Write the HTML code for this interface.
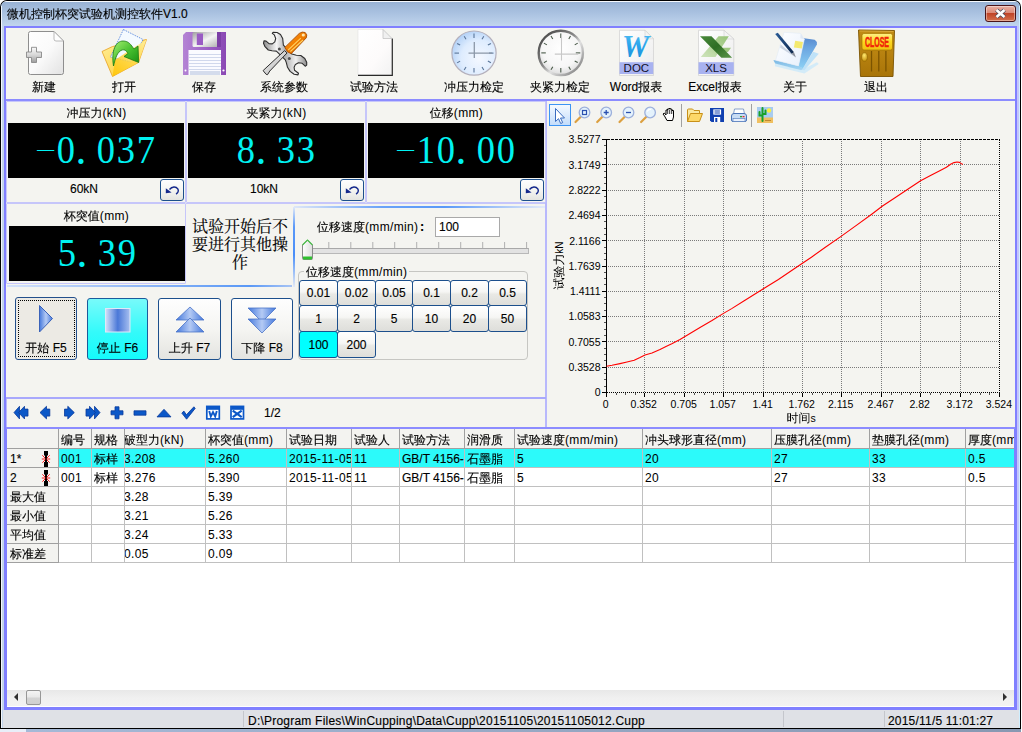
<!DOCTYPE html><html><head><meta charset="utf-8"><title>微机控制杯突试验机测控软件V1.0</title><style>
*{box-sizing:border-box;margin:0;padding:0}
html,body{width:1022px;height:732px;overflow:hidden;background:#fff}
body{position:relative;font-family:"Liberation Sans","WenQuanYi Zen Hei","Noto Sans CJK SC",sans-serif;font-size:12px;color:#000;line-height:14px;-webkit-text-stroke:.13px #000}
.a{position:absolute}
.l{letter-spacing:.35px;-webkit-text-stroke:.04px #000}
.c{position:absolute;text-align:center;white-space:nowrap}
.t{position:absolute;white-space:nowrap}
.pnl{position:absolute;border:1px solid #c6c6fa;border-radius:1px}
.blk{position:absolute;background:#000;overflow:hidden}
.dig{-webkit-text-stroke:0;position:absolute;left:0;right:0;text-align:center;color:#00f2f2;font-family:"Liberation Serif","Noto Serif CJK SC",serif;font-size:41px;line-height:41px;white-space:nowrap}
.dig i{display:inline-block;width:20px;font-style:normal;text-align:center;transform:translateX(-.3px) scaleX(.89)}
.dig i.m{transform:translate(-1.7px,-.9px) scale(.9,.55);transform-origin:50% 60%}
.dig i.p{transform:translate(-5px,0) scale(1.06)}
.btn{position:absolute;border:1px solid #1c4f8c;border-radius:3px;background:linear-gradient(#fefefe,#f5f5f2 50%,#e4e4e0);text-align:center;white-space:nowrap}
.sb{position:absolute;border:1px solid #1c4f8c;border-radius:3px;background:linear-gradient(#ffffff,#f6f6f4 45%,#e9e9e5 55%,#dededa);text-align:center;line-height:24px;font-size:12px}
.hd{position:absolute;background:#f3f3f0;border-right:1px solid #a0a0a0;border-bottom:1px solid #a0a0a0;overflow:hidden;white-space:nowrap;height:19px;line-height:20px;font-size:12px}
.cl{position:absolute;border-right:1px solid #c0c0c0;border-bottom:1px solid #c0c0c0;overflow:hidden;white-space:nowrap;height:19px;line-height:20px;font-size:12px}
</style></head><body>
<div class="a" style="left:0;top:729px;width:1021px;height:3px;background:linear-gradient(90deg,#a6bad8,#8898b2)"></div>
<div class="a" style="left:0;top:729px;width:26px;height:3px;background:#e8eef8"></div>
<div class="a" style="left:0;top:0;width:1021px;height:729px;background:#000;border-radius:7px 7px 0 0"></div>
<div class="a" style="left:1px;top:1px;width:1019px;height:727px;background:#c3d4ea;border-radius:6px 6px 0 0"></div>
<div class="a" style="left:1px;top:1px;width:1019px;height:26px;background:linear-gradient(#f6f9fd 0,#f6f9fd 1px,#98b2d4 1px,#a9c1e0 45%,#c2d6ee);border-radius:6px 6px 0 0"></div>
<div class="a" style="left:1019px;top:6px;width:1px;height:722px;background:#cfefff"></div>
<div class="a" style="left:1px;top:6px;width:1px;height:722px;background:#f2f6fc"></div>
<div class="t" style="left:7px;top:7px;font-size:12px;line-height:14px">微机控制杯突试验机测控软件V1.0</div>
<div class="a" style="left:985px;top:5px;width:31px;height:17px;border:1px solid #4a1418;border-radius:3px;background:linear-gradient(#e9b0a2,#dc8a78 45%,#c04428 50%,#d4704c);box-shadow:inset 0 0 0 1px rgba(255,255,255,.4)"></div>
<svg class="a" style="left:994px;top:8px" width="13" height="11" viewBox="0 0 13 11"><path d="M2.5 2 L10.5 9 M10.5 2 L2.5 9" stroke="#4a4a5a" stroke-width="4.2" fill="none"/><path d="M2.5 2 L10.5 9 M10.5 2 L2.5 9" stroke="#fff" stroke-width="2.6" fill="none"/></svg>
<div class="a" style="left:4px;top:26px;width:1015px;height:684px;background:#c4c4fc"></div>
<div class="a" style="left:4px;top:26px;width:1013px;height:684px;background:#8080ff"></div>
<div class="a" style="left:6px;top:28px;width:1009px;height:679px;background:#f4f4f0"></div>
<div class="c" style="left:-6px;top:80px;width:100px;line-height:14px">新建</div>
<div class="c" style="left:74px;top:80px;width:100px;line-height:14px">打开</div>
<div class="c" style="left:154px;top:80px;width:100px;line-height:14px">保存</div>
<div class="c" style="left:234px;top:80px;width:100px;line-height:14px">系统参数</div>
<div class="c" style="left:324px;top:80px;width:100px;line-height:14px">试验方法</div>
<div class="c" style="left:424px;top:80px;width:100px;line-height:14px">冲压力检定</div>
<div class="c" style="left:510px;top:80px;width:100px;line-height:14px">夹紧力检定</div>
<div class="c" style="left:586px;top:80px;width:100px;line-height:14px">Word报表</div>
<div class="c" style="left:665px;top:80px;width:100px;line-height:14px">Excel报表</div>
<div class="c" style="left:745px;top:80px;width:100px;line-height:14px">关于</div>
<div class="c" style="left:826px;top:80px;width:100px;line-height:14px">退出</div>
<svg class="a" style="left:24px;top:28px" width="44" height="50" viewBox="24 28 44 50"><defs><linearGradient id="nd1" x1="0" y1="0" x2="1" y2="1"><stop offset="0" stop-color="#ffffff"/><stop offset=".5" stop-color="#fafafa"/><stop offset="1" stop-color="#e2e2e2"/></linearGradient><linearGradient id="nd2" x1="0" y1="0" x2="0" y2="1"><stop offset="0" stop-color="#fafafa"/><stop offset=".5" stop-color="#d8d8d8"/><stop offset="1" stop-color="#9c9c9c"/></linearGradient></defs><path d="M30.5 31.5 H54 L63.5 41 V72.5 Q63.5 74.5 61.5 74.5 H30.5 Q28.5 74.5 28.5 72.5 V33.5 Q28.5 31.5 30.5 31.5Z" fill="url(#nd1)" stroke="#8e8e8e" stroke-width="1"/><path d="M54 31.5 V39 Q54 41 56 41 H63.5 Z" fill="#fdfdfd" stroke="#a8a8a8" stroke-width=".8"/><path d="M31.500 47.300 H36.500 V52 H41.500 V57.500 H36.500 V62.500 H31.500 V57.500 H26.500 V52 H31.500Z" fill="url(#nd2)" stroke="#8a8a8a" stroke-width=".9" stroke-linejoin="round"/></svg>
<svg class="a" style="left:98px;top:27px" width="52" height="52" viewBox="98 27 52 52"><defs><linearGradient id="op1" x1="0" y1="0" x2="1" y2="1"><stop offset="0" stop-color="#fff0a0"/><stop offset="1" stop-color="#ffc820"/></linearGradient><linearGradient id="op2" x1="0" y1="1" x2="1" y2="0"><stop offset="0" stop-color="#ffc400"/><stop offset=".5" stop-color="#ffd84a"/><stop offset="1" stop-color="#fff2a8"/></linearGradient><linearGradient id="op3" x1="0" y1="0" x2="1" y2="1"><stop offset="0" stop-color="#a6f070"/><stop offset=".5" stop-color="#48c030"/><stop offset="1" stop-color="#148a10"/></linearGradient></defs><path d="M102 51.5 L112.5 46.5 L146.5 39.5 L138.5 62.5 L112.5 76.5Z" fill="url(#op1)" stroke="#e8a020" stroke-width=".8"/><path d="M123.4 29.5 L143 39.5 L131 62 L110.5 57Z" fill="#f4faff" stroke="#5a8ae0" stroke-width=".9" stroke-dasharray="1.5 1"/><path d="M112.5 76.5 L115 60 L130 50 L146.5 39.5 L138.5 62.5Z" fill="url(#op2)" opacity=".85"/><path d="M113.5 66 C111 50 116 41 123 41 C129 41 131 45 134 49 L138 46 L138.7 62.5 L124 56.5 L128 53.5 C126 50 124 49.5 122 50 C117 52 115.5 58 113.5 66Z" fill="url(#op3)" stroke="#1c7a10" stroke-width=".8"/></svg>
<svg class="a" style="left:180px;top:30px" width="50" height="48" viewBox="180 30 50 48"><defs><linearGradient id="sv1" x1="0" y1="0" x2="1" y2="0"><stop offset="0" stop-color="#b484d4"/><stop offset=".5" stop-color="#a064c8"/><stop offset="1" stop-color="#8a48b4"/></linearGradient><linearGradient id="sv2" x1="0" y1="0" x2="1" y2="1"><stop offset="0" stop-color="#a0a0a0"/><stop offset=".5" stop-color="#f4f4f4"/><stop offset="1" stop-color="#a8a8a8"/></linearGradient></defs><path d="M186 32 H226 V75 H183 V35Z" fill="url(#sv1)"/><rect x="192.5" y="32" width="28.5" height="15" rx="1.5" fill="url(#sv2)"/><rect x="217" y="32" width="4" height="15" fill="#7c3fa6"/><rect x="196.8" y="33.5" width="6.2" height="11.5" fill="#9a5cc4"/><rect x="188.5" y="50" width="32.5" height="25" fill="#fafbff"/><path d="M189 54.5H221M189 57.5H221M189 60.5H221M189 63.5H221M189 66.5H221M189 69.5H221" stroke="#d0d8ec" stroke-width="1"/><rect x="190" y="71" width="30" height="4" fill="#d4dcec"/><circle cx="185.5" cy="70.5" r="1" fill="#fff"/><circle cx="223.5" cy="70.5" r="1.1" fill="#fff"/></svg>
<svg class="a" style="left:258px;top:28px" width="54" height="50" viewBox="258 28 54 50"><defs><linearGradient id="tl1" x1="0" y1="0" x2="1" y2="0"><stop offset="0" stop-color="#8c8c8c"/><stop offset=".3" stop-color="#f6f6f6"/><stop offset=".5" stop-color="#b0b0b0"/><stop offset=".75" stop-color="#f0f0f0"/><stop offset="1" stop-color="#8c8c8c"/></linearGradient><linearGradient id="tl2" x1="0" y1="0" x2="1" y2="1"><stop offset="0" stop-color="#ffffff"/><stop offset="1" stop-color="#a8a8a8"/></linearGradient><linearGradient id="tl3" x1="0" y1="0" x2="1" y2="1"><stop offset="0" stop-color="#ffa020"/><stop offset=".5" stop-color="#f07c00"/><stop offset="1" stop-color="#c85c00"/></linearGradient></defs><polygon points="273.1 32.3 277.1 32.5 280.5 34.5 282.7 38.5 283.4 45.2 291.9 54.0 296.3 55.2 300.8 55.5 304.8 58.5 306.7 62.2 306.7 65.1 305.2 66.2 302.2 63.3 298.5 62.8 295.4 64.4 294.1 67.3 294.5 70.3 298.5 73.2 298.0 74.9 294.1 74.3 290.1 71.4 287.5 67.3 286.4 62.9 285.3 59.9 276.4 51.1 272.0 50.7 268.3 50.0 265.0 46.7 263.5 43.3 264.0 40.8 266.1 41.1 269.0 43.6 272.3 43.9 274.8 41.9 275.7 38.5 274.3 34.9 272.3 33.4" fill="url(#tl1)" stroke="#2e2e2e" stroke-width="1.100" stroke-linejoin="round"/><circle cx="279.400" cy="48.900" r="1.500" fill="#505050"/><circle cx="289.300" cy="58.500" r="1.500" fill="#505050"/><polygon points="263.1 70.6 265.0 68.8 284.5 50.7 287.1 52.9 269.8 71.0 267.5 74.7 266.1 74.3" fill="url(#tl2)" stroke="#2e2e2e" stroke-width="1" stroke-linejoin="round"/><polygon points="284.9 47.4 299.3 33.4 302.2 32.1 305.2 32.5 306.8 34.9 306.3 37.8 291.2 53.7 287.5 51.8" fill="url(#tl3)" stroke="#a84c00" stroke-width=".9" stroke-linejoin="round"/><path d="M288.200 50 L300.800 38.200 M290.400 51.500 L303 40" stroke="#ffd060" stroke-width="1.100"/><circle cx="303.300" cy="35" r="1.600" fill="#ffe8b0"/></svg>
<svg class="a" style="left:354px;top:27px" width="42" height="52" viewBox="354 27 42 52"><defs><linearGradient id="bd1" x1="0" y1="0" x2="1" y2="1"><stop offset="0" stop-color="#ffffff"/><stop offset=".6" stop-color="#fdfbfb"/><stop offset="1" stop-color="#f2f2f2"/></linearGradient></defs><path d="M358 29.500 H383 L392 38.500 V75 H358Z" fill="url(#bd1)" stroke="#e2e2e2" stroke-width=".6"/><path d="M358 75.300 H392.300 V38.500" stroke="#2a2a2a" stroke-width="1.2" fill="none"/><path d="M383 29.500 V38.500 H392Z" fill="#f0f0f0" stroke="#bdbdbd" stroke-width=".7"/></svg>
<svg class="a" style="left:448px;top:27px" width="52" height="52" viewBox="448 27 52 52"><defs><radialGradient id="c1a" cx=".62" cy=".62" r=".75"><stop offset="0" stop-color="#f4f8ff"/><stop offset=".55" stop-color="#deecfe"/><stop offset="1" stop-color="#a4c8f4"/></radialGradient></defs><circle cx="474" cy="53.1" r="22.1" fill="url(#c1a)" stroke="#b4b0bc" stroke-width="1.200"/><line x1="474.0" y1="38.1" x2="474.0" y2="33.6" stroke="#587498" stroke-width="1.1"/><line x1="482.0" y1="39.2" x2="483.8" y2="36.2" stroke="#587498" stroke-width="1.1"/><line x1="487.9" y1="45.1" x2="490.9" y2="43.4" stroke="#587498" stroke-width="1.1"/><line x1="489.0" y1="53.1" x2="493.5" y2="53.1" stroke="#587498" stroke-width="1.1"/><line x1="487.9" y1="61.1" x2="490.9" y2="62.8" stroke="#587498" stroke-width="1.1"/><line x1="482.0" y1="67.0" x2="483.8" y2="70.0" stroke="#587498" stroke-width="1.1"/><line x1="474.0" y1="68.1" x2="474.0" y2="72.6" stroke="#587498" stroke-width="1.1"/><line x1="466.0" y1="67.0" x2="464.2" y2="70.0" stroke="#587498" stroke-width="1.1"/><line x1="460.1" y1="61.1" x2="457.1" y2="62.9" stroke="#587498" stroke-width="1.1"/><line x1="459.0" y1="53.1" x2="454.5" y2="53.1" stroke="#587498" stroke-width="1.1"/><line x1="460.1" y1="45.1" x2="457.1" y2="43.4" stroke="#587498" stroke-width="1.1"/><line x1="466.0" y1="39.2" x2="464.2" y2="36.2" stroke="#587498" stroke-width="1.1"/><path d="M474.3 42.1 V58.1 M468.5 53.1 H492" stroke="#8c98a8" stroke-width="1.300" fill="none"/></svg>
<svg class="a" style="left:534px;top:26px" width="52" height="52" viewBox="534 26 52 52"><defs><radialGradient id="c2a" cx=".5" cy=".4" r=".6"><stop offset="0" stop-color="#ffffff"/><stop offset=".7" stop-color="#f6f6f6"/><stop offset="1" stop-color="#dcdcdc"/></radialGradient><linearGradient id="c2b" x1="0" y1="0" x2="1" y2="1"><stop offset="0" stop-color="#3a3a3a"/><stop offset=".45" stop-color="#8a8a8a"/><stop offset=".6" stop-color="#e0e0e0"/><stop offset="1" stop-color="#6a6a6a"/></linearGradient></defs><circle cx="560.8" cy="52.9" r="22.1" fill="url(#c2a)" stroke="url(#c2b)" stroke-width="2.4"/><line x1="560.8" y1="37.9" x2="560.8" y2="33.4" stroke="#485848" stroke-width="1.1"/><line x1="568.8" y1="39.0" x2="570.5" y2="36.0" stroke="#485848" stroke-width="1.1"/><line x1="574.7" y1="44.9" x2="577.7" y2="43.1" stroke="#485848" stroke-width="1.1"/><line x1="575.8" y1="52.9" x2="580.3" y2="52.9" stroke="#485848" stroke-width="1.1"/><line x1="574.7" y1="60.9" x2="577.7" y2="62.6" stroke="#485848" stroke-width="1.1"/><line x1="568.8" y1="66.8" x2="570.5" y2="69.8" stroke="#485848" stroke-width="1.1"/><line x1="560.8" y1="67.9" x2="560.8" y2="72.4" stroke="#485848" stroke-width="1.1"/><line x1="552.8" y1="66.8" x2="551.0" y2="69.8" stroke="#485848" stroke-width="1.1"/><line x1="546.9" y1="60.9" x2="543.9" y2="62.7" stroke="#485848" stroke-width="1.1"/><line x1="545.8" y1="52.9" x2="541.3" y2="52.9" stroke="#485848" stroke-width="1.1"/><line x1="546.9" y1="44.9" x2="543.9" y2="43.1" stroke="#485848" stroke-width="1.1"/><line x1="552.8" y1="39.0" x2="551.0" y2="36.0" stroke="#485848" stroke-width="1.1"/><path d="M561.5 34.4 V60.4 M554.8 54.1 H578.3" stroke="#c8c8c8" stroke-width="1.100" fill="none"/></svg>
<svg class="a" style="left:616px;top:28px" width="42" height="50" viewBox="616 28 42 50"><defs><linearGradient id="wd1" x1="0" y1="0" x2="1" y2="1"><stop offset="0" stop-color="#ffffff"/><stop offset="1" stop-color="#ececec"/></linearGradient><linearGradient id="wd2" x1="0" y1="0" x2="0" y2="1"><stop offset="0" stop-color="#5cc4f4"/><stop offset=".5" stop-color="#28a4ec"/><stop offset="1" stop-color="#1888d0"/></linearGradient></defs><path d="M619.500 30.300 H645 L653.500 38.800 V75.500 H619.500Z" fill="url(#wd1)" stroke="#d0d0d0" stroke-width=".7"/><path d="M645 30.300 V38.800 H653.500Z" fill="#f4f4f4" stroke="#c8c8c8" stroke-width=".5"/><rect x="619.500" y="62.200" width="33.800" height="11.800" fill="#a8b2f0"/><text x="636.400" y="71.800" font-family="Liberation Sans,sans-serif" font-size="11.500" text-anchor="middle" fill="#10102a">DOC</text><text x="635.500" y="57.300" font-family="Liberation Serif,serif" font-size="32" font-weight="bold" font-style="italic" text-anchor="middle" fill="url(#wd2)" textLength="27" lengthAdjust="spacingAndGlyphs">W</text></svg>
<svg class="a" style="left:695px;top:28px" width="42" height="50" viewBox="695 28 42 50"><defs><linearGradient id="xl2" x1="0" y1="0" x2="1" y2="1"><stop offset="0" stop-color="#4a8a3c"/><stop offset=".5" stop-color="#2e6e24"/><stop offset="1" stop-color="#5a9448"/></linearGradient><linearGradient id="xl3" x1="1" y1="0" x2="0" y2="1"><stop offset="0" stop-color="#98c478"/><stop offset="1" stop-color="#cfe4bc"/></linearGradient><linearGradient id="xl1" x1="0" y1="0" x2="1" y2="1"><stop offset="0" stop-color="#ffffff"/><stop offset="1" stop-color="#ececec"/></linearGradient></defs><path d="M698.500 30.300 H724 L733.800 39 V75.500 H698.500Z" fill="url(#xl1)" stroke="#d0d0d0" stroke-width=".7"/><path d="M724 30.300 V39 H733.800Z" fill="#f4f4f4" stroke="#c8c8c8" stroke-width=".5"/><rect x="698.500" y="62.200" width="35.300" height="11.800" fill="#a8b2f0"/><text x="716" y="71.800" font-family="Liberation Sans,sans-serif" font-size="11.500" text-anchor="middle" fill="#10102a">XLS</text><polygon points="718.5 36.3 728.8 36.3 715.5 57 700.8 57" fill="url(#xl3)"/><polygon points="722.500 47.800 731 47.800 728 52 725 52" fill="#a0c880"/><polygon points="700 36.300 711.500 36.300 732.100 57.700 721.400 57.700" fill="url(#xl2)"/></svg>
<svg class="a" style="left:770px;top:28px" width="54" height="50" viewBox="770 28 54 50"><defs><linearGradient id="ab1" x1="0" y1="0" x2="1" y2="1"><stop offset="0" stop-color="#ffffff"/><stop offset="1" stop-color="#e8f0fc"/></linearGradient><linearGradient id="ab2" x1="0" y1="0" x2="0" y2="1"><stop offset="0" stop-color="#5a8cd0"/><stop offset=".3" stop-color="#6aa4e0"/><stop offset="1" stop-color="#8cd0f4"/></linearGradient><linearGradient id="ab3" x1="0" y1="0" x2="1" y2="0"><stop offset="0" stop-color="#2a5c98"/><stop offset="1" stop-color="#10284c"/></linearGradient><linearGradient id="ab4" x1="0" y1="0" x2="0" y2="1"><stop offset="0" stop-color="#7ab8e4"/><stop offset="1" stop-color="#a8d8f4"/></linearGradient></defs><polygon points="816.9 62.2 818.8 64.0 804.4 73.6 774.9 66.2 775.2 62.9 801.4 70.3" fill="#cfeaf8" opacity=".9"/><polygon points="813.2 51.8 818.8 53.7 804.4 70.3 788.1 67.3 798.5 66.2 802.9 68.4" fill="#bfe2f8"/><polygon points="773.4 60.3 775.6 60.3 798.5 65.9 802.9 68.4 801.4 70.3 775.2 63.6" fill="url(#ab4)"/><polygon points="804.0 38.2 814.7 39.7 816.9 41.9 816.9 44.5 802.9 68.4 798.5 66.2" fill="url(#ab2)"/><polygon points="784.1 32.3 800.7 33.4 804.4 39.3 798.5 65.9 775.6 60.3" fill="url(#ab1)" stroke="#dfe8f4" stroke-width=".5"/><polygon points="800.7 33.4 800.3 38.2 804.4 39.3" fill="#e0e8f4"/><polygon points="780.8 44.5 791.5 53.7 795.9 57.6 780.0 47.4" fill="#9aa8c0" opacity=".45"/><polygon points="795.2 40.8 802.9 41.9 801.8 48.5 793.9 47.4" fill="#f4ea70"/><polygon points="775.2 34.0 777.8 32.8 794.0 52.2 791.5 53.7" fill="url(#ab3)"/><polygon points="794.0 52.2 791.5 53.7 795.9 57.6" fill="#8a8e98"/></svg>
<svg class="a" style="left:854px;top:27px" width="44" height="52" viewBox="854 27 44 52"><defs><linearGradient id="dr1" x1="0" y1="0" x2="0" y2="1"><stop offset="0" stop-color="#c08a14"/><stop offset=".5" stop-color="#b88210"/><stop offset="1" stop-color="#a87408"/></linearGradient><linearGradient id="dr2" x1="0" y1="0" x2="0" y2="1"><stop offset="0" stop-color="#fff088"/><stop offset=".5" stop-color="#fcd820"/><stop offset="1" stop-color="#f0c010"/></linearGradient><radialGradient id="dr3" cx=".45" cy=".3" r=".7"><stop offset="0" stop-color="#ffe870"/><stop offset="1" stop-color="#c89410"/></radialGradient></defs><path d="M858.500 30 L894.500 30.500 L893 76.500 L860.500 76.500Z" fill="url(#dr1)" stroke="#7a5200" stroke-width=".9" stroke-linejoin="round"/><path d="M859.500 31 L893.500 31.500" stroke="#d8a838" stroke-width="1"/><rect x="862" y="33.500" width="30.500" height="16.500" rx="2" fill="url(#dr2)" stroke="#a87800" stroke-width=".7"/><text x="877" y="46.700" font-family="Liberation Sans,sans-serif" font-size="14" font-weight="bold" text-anchor="middle" fill="#f02408" stroke="#f02408" stroke-width=".5" textLength="24" lengthAdjust="spacingAndGlyphs">CLOSE</text><path d="M871.500 51 V71.500 M878.800 51 V71.500 M885.900 51 V71.500" stroke="#7c5400" stroke-width="1.300"/><ellipse cx="864.500" cy="57" rx="2.900" ry="4.200" fill="url(#dr3)" stroke="#8a6000" stroke-width=".6"/></svg>
<div class="a" style="left:6px;top:99px;width:1009px;height:2px;background:#8c8cff"></div>
<div class="a" style="left:545px;top:101px;width:2px;height:327px;background:#b8b8fc"></div>
<div class="pnl" style="left:6px;top:101px;width:180px;height:102px"></div>
<div class="c" style="left:7px;top:106px;width:179px">冲压力<span class="l">(kN)</span></div>
<div class="blk" style="left:8px;top:123px;width:176px;height:55px"><div class="dig" style="top:6px"><i class="m">−</i><i>0</i><i class="p">.</i><i>0</i><i>3</i><i>7</i></div></div>
<div class="c" style="left:7px;top:182px;width:154px">60kN</div>
<div class="btn" style="left:160px;top:179px;width:24px;height:22px"></div>
<svg class="a" style="left:164px;top:183px" width="18" height="14" viewBox="0 0 18 14"><path d="M5.500 6.500 C8 3.200 12 3.200 13.800 5.800 C15 8 14 10 12 11" stroke="#14288c" stroke-width="1.400" fill="none"/><path d="M1.800 5.200 L1.800 10.300 L7.600 9.600Z" fill="#14288c"/></svg>
<div class="pnl" style="left:186px;top:101px;width:180px;height:102px"></div>
<div class="c" style="left:187px;top:106px;width:179px">夹紧力<span class="l">(kN)</span></div>
<div class="blk" style="left:188px;top:123px;width:176px;height:55px"><div class="dig" style="top:6px"><i>8</i><i class="p">.</i><i>3</i><i>3</i></div></div>
<div class="c" style="left:187px;top:182px;width:154px">10kN</div>
<div class="btn" style="left:340px;top:179px;width:24px;height:22px"></div>
<svg class="a" style="left:344px;top:183px" width="18" height="14" viewBox="0 0 18 14"><path d="M5.500 6.500 C8 3.200 12 3.200 13.800 5.800 C15 8 14 10 12 11" stroke="#14288c" stroke-width="1.400" fill="none"/><path d="M1.800 5.200 L1.800 10.300 L7.600 9.600Z" fill="#14288c"/></svg>
<div class="pnl" style="left:366px;top:101px;width:180px;height:102px"></div>
<div class="c" style="left:367px;top:106px;width:179px">位移<span class="l">(mm)</span></div>
<div class="blk" style="left:368px;top:123px;width:176px;height:55px"><div class="dig" style="top:6px"><i class="m">−</i><i>1</i><i>0</i><i class="p">.</i><i>0</i><i>0</i></div></div>
<div class="btn" style="left:520px;top:179px;width:24px;height:22px"></div>
<svg class="a" style="left:524px;top:183px" width="18" height="14" viewBox="0 0 18 14"><path d="M5.500 6.500 C8 3.200 12 3.200 13.800 5.800 C15 8 14 10 12 11" stroke="#14288c" stroke-width="1.400" fill="none"/><path d="M1.800 5.200 L1.800 10.300 L7.600 9.600Z" fill="#14288c"/></svg>
<div class="a" style="left:186px;top:203px;width:359px;height:1px;background:#c6c6fa"></div>
<div class="pnl" style="left:6px;top:203px;width:180px;height:81px"></div>
<div class="c" style="left:7px;top:209px;width:179px">杯突值<span class="l">(mm)</span></div>
<div class="blk" style="left:9px;top:226px;width:176px;height:55px"><div class="dig" style="top:6px"><i>5</i><i class="p">.</i><i>3</i><i>9</i></div></div>
<div class="a" style="left:7px;top:285px;width:285px;height:2px;background:linear-gradient(90deg,#d4e2fa,#8ab4f6 50%,#5a98f6 85%,#a8c4f4)"></div>
<div class="c" style="left:189px;top:218px;width:102px;font-family:'Liberation Serif','Noto Serif CJK SC',serif;font-size:16px;line-height:18px;white-space:normal;letter-spacing:0">试验开始后不要进行其他操作</div>
<div class="a" style="left:294px;top:206px;width:251px;height:2px;background:linear-gradient(90deg,#dde6f8,#6aa2f8 35%,#5a98f8 60%,#e4eaf8)"></div>
<div class="a" style="left:293px;top:207px;width:2px;height:80px;background:linear-gradient(#dfe8f8,#5a98f8 25%,#4a8ef8 60%,#e4eaf6)"></div>
<div class="t" style="left:317px;top:220px">位移速度<span class="l">(mm/min)</span><b style="font-family:'Liberation Mono',monospace">:</b></div>
<div class="a" style="left:435px;top:217px;width:65px;height:20px;background:#fff;border:1px solid #a9a9a9"></div>
<div class="t" style="left:439px;top:220px">100</div>
<div class="a" style="left:311px;top:248px;width:218px;height:6px;background:#e2e2e2;border:1px solid #b8b8b8;border-top-color:#a8a8a8"></div>
<svg class="a" style="left:307px;top:242px" width="225" height="6" viewBox="0 0 225 6"><rect x="21.3" y="0" width="1" height="6" fill="#b0b0b0"/><rect x="43.3" y="0" width="1" height="6" fill="#b0b0b0"/><rect x="65.3" y="0" width="1" height="6" fill="#b0b0b0"/><rect x="87.2" y="0" width="1" height="6" fill="#b0b0b0"/><rect x="109.2" y="0" width="1" height="6" fill="#b0b0b0"/><rect x="131.2" y="0" width="1" height="6" fill="#b0b0b0"/><rect x="153.2" y="0" width="1" height="6" fill="#b0b0b0"/><rect x="175.2" y="0" width="1" height="6" fill="#b0b0b0"/><rect x="197.1" y="0" width="1" height="6" fill="#b0b0b0"/><rect x="219.1" y="0" width="1" height="6" fill="#b0b0b0"/></svg>
<svg class="a" style="left:301px;top:239px" width="13" height="22" viewBox="0 0 13 22"><path d="M6.500 1 L11.500 6 V19.500 Q11.500 20.500 10.500 20.500 H2.500 Q1.500 20.500 1.500 19.500 V6Z" fill="url(#th1)" stroke="#8a8a8a" stroke-width="1"/><rect x="2" y="17.500" width="9" height="3" fill="#30c030"/><path d="M1.500 6 L6.500 1 L11.500 6" stroke="#48c048" stroke-width="1.100" fill="none"/><defs><linearGradient id="th1" x1="0" y1="0" x2="1" y2="0"><stop offset="0" stop-color="#ffffff"/><stop offset="1" stop-color="#dcdcdc"/></linearGradient></defs></svg>
<div class="a" style="left:298px;top:271px;width:230px;height:89px;border:1px solid #c6c6c2;border-radius:4px"></div>
<div class="t" style="left:304px;top:265px;background:#f4f4f0;padding:0 2px">位移速度<span class="l">(mm/min)</span></div>
<div class="sb" style="left:299px;top:280px;width:39px;height:26px;line-height:25px">0.01</div>
<div class="sb" style="left:337px;top:280px;width:39px;height:26px;line-height:25px">0.02</div>
<div class="sb" style="left:375px;top:280px;width:38px;height:26px;line-height:25px">0.05</div>
<div class="sb" style="left:412px;top:280px;width:39px;height:26px;line-height:25px">0.1</div>
<div class="sb" style="left:450px;top:280px;width:39px;height:26px;line-height:25px">0.2</div>
<div class="sb" style="left:488px;top:280px;width:39px;height:26px;line-height:25px">0.5</div>
<div class="sb" style="left:299px;top:305px;width:39px;height:27px;line-height:26px">1</div>
<div class="sb" style="left:337px;top:305px;width:39px;height:27px;line-height:26px">2</div>
<div class="sb" style="left:375px;top:305px;width:38px;height:27px;line-height:26px">5</div>
<div class="sb" style="left:412px;top:305px;width:39px;height:27px;line-height:26px">10</div>
<div class="sb" style="left:450px;top:305px;width:39px;height:27px;line-height:26px">20</div>
<div class="sb" style="left:488px;top:305px;width:39px;height:27px;line-height:26px">50</div>
<div class="sb" style="left:299px;top:331px;width:39px;height:27px;line-height:26px;background:#00ffff">100</div>
<div class="sb" style="left:337px;top:331px;width:39px;height:27px;line-height:26px">200</div>
<div class="btn" style="left:15px;top:297px;width:62px;height:63px;background:#eceae4;border-color:#24508c"></div>
<svg class="a" style="left:37px;top:303px" width="18" height="32" viewBox="0 0 18 32"><defs><linearGradient id="g5" x1="0" y1="0" x2="1" y2="0"><stop offset="0" stop-color="#4478dc"/><stop offset=".5" stop-color="#b4caf4"/><stop offset="1" stop-color="#4478dc"/></linearGradient><linearGradient id="g5v" x1="0" y1="0" x2="0" y2="1"><stop offset="0" stop-color="#c8d8f4"/><stop offset="1" stop-color="#4a7ad8"/></linearGradient></defs><path d="M2.500 2.500 L15.500 15.500 L2.500 29Z" fill="url(#g5)" stroke="#3a62b8" stroke-width="1"/></svg>
<div class="c" style="left:15px;top:341px;width:62px;font-size:12px;line-height:14px">开始 F5</div>
<div class="a" style="left:18px;top:300px;width:57px;height:57px;border:1px dotted #000"></div>
<div class="btn" style="left:87px;top:298px;width:61px;height:62px;background:linear-gradient(#78fafa,#34fafa 55%,#14fcfc);border-color:#1c5a9c"></div>
<svg class="a" style="left:104px;top:307px" width="28" height="27" viewBox="0 0 28 27"><defs><linearGradient id="g6" x1="0" y1="0" x2="1" y2="0"><stop offset="0" stop-color="#4478dc"/><stop offset=".5" stop-color="#b4caf4"/><stop offset="1" stop-color="#4478dc"/></linearGradient><linearGradient id="g6v" x1="0" y1="0" x2="0" y2="1"><stop offset="0" stop-color="#c8d8f4"/><stop offset="1" stop-color="#4a7ad8"/></linearGradient></defs><rect x="1.500" y="1.500" width="24.500" height="23.500" fill="url(#g6i)" stroke="#dfe8f8" stroke-width="1"/><defs><linearGradient id="g6i" x1="0" y1="0" x2="1" y2="0"><stop offset="0" stop-color="#d4e0f8"/><stop offset=".5" stop-color="#4a78d8"/><stop offset="1" stop-color="#a8c0f0"/></linearGradient></defs></svg>
<div class="c" style="left:87px;top:341px;width:61px;font-size:12px;line-height:14px">停止 F6</div>
<div class="btn" style="left:158px;top:298px;width:63px;height:62px;"></div>
<svg class="a" style="left:174px;top:305px" width="32" height="30" viewBox="0 0 32 30"><defs><linearGradient id="g7" x1="0" y1="0" x2="1" y2="0"><stop offset="0" stop-color="#4478dc"/><stop offset=".5" stop-color="#b4caf4"/><stop offset="1" stop-color="#4478dc"/></linearGradient><linearGradient id="g7v" x1="0" y1="0" x2="0" y2="1"><stop offset="0" stop-color="#c8d8f4"/><stop offset="1" stop-color="#4a7ad8"/></linearGradient></defs><path d="M16 2 L30 15 H2Z" fill="url(#g7)" stroke="#4a74c8" stroke-width=".8"/><path d="M16 13 L30 27 H2Z" fill="url(#g7)" stroke="#4a74c8" stroke-width=".8"/></svg>
<div class="c" style="left:158px;top:341px;width:63px;font-size:12px;line-height:14px">上升 F7</div>
<div class="btn" style="left:231px;top:298px;width:62px;height:62px;"></div>
<svg class="a" style="left:246px;top:305px" width="32" height="30" viewBox="0 0 32 30"><defs><linearGradient id="g8" x1="0" y1="0" x2="1" y2="0"><stop offset="0" stop-color="#4478dc"/><stop offset=".5" stop-color="#b4caf4"/><stop offset="1" stop-color="#4478dc"/></linearGradient><linearGradient id="g8v" x1="0" y1="0" x2="0" y2="1"><stop offset="0" stop-color="#c8d8f4"/><stop offset="1" stop-color="#4a7ad8"/></linearGradient></defs><path d="M16 17 L30 3 H2Z" fill="url(#g8)" stroke="#4a74c8" stroke-width=".8"/><path d="M16 28 L30 14 H2Z" fill="url(#g8)" stroke="#4a74c8" stroke-width=".8"/></svg>
<div class="c" style="left:231px;top:341px;width:62px;font-size:12px;line-height:14px">下降 F8</div>
<div class="a" style="left:6px;top:397px;width:540px;height:2px;background:#a8a8fc"></div>
<div class="a" style="left:6px;top:399px;width:1px;height:28px;background:#b8b8fc"></div>
<svg class="a" style="left:0;top:400px" width="260" height="27" viewBox="0 400 260 27"><g transform="translate(21.0,412.600)"><path d="M-7 0 L-1.500 -6.300 V6.300Z" fill="#0c58c8" stroke="#0a3a9a" stroke-width=".8" stroke-linejoin="round"/><path d="M-2.500 0 L3.500 -6.300 V-3.500 H7 V3.500 H3.500 V6.300Z" fill="#0c58c8" stroke="#0a3a9a" stroke-width=".8" stroke-linejoin="round"/></g><g transform="translate(45.0,412.600)"><path d="M-5 0 L1.500 -6.300 V-3.500 H4.800 V3.500 H1.500 V6.300Z" fill="#0c58c8" stroke="#0a3a9a" stroke-width=".8" stroke-linejoin="round"/></g><g transform="translate(69.3,412.600)"><path d="M5 0 L-1.500 -6.300 V-3.500 H-4.800 V3.500 H-1.500 V6.300Z" fill="#0c58c8" stroke="#0a3a9a" stroke-width=".8" stroke-linejoin="round"/></g><g transform="translate(93.0,412.600)"><path d="M7 0 L1.500 -6.300 V6.300Z" fill="#0c58c8" stroke="#0a3a9a" stroke-width=".8" stroke-linejoin="round"/><path d="M2.500 0 L-3.500 -6.300 V-3.500 H-7 V3.500 H-3.500 V6.300Z" fill="#0c58c8" stroke="#0a3a9a" stroke-width=".8" stroke-linejoin="round"/></g><g transform="translate(117.0,412.600)"><path d="M-2 -5.800 H2 V-1.800 H6 V2.200 H2 V6.200 H-2 V2.200 H-6 V-1.800 H-2Z" fill="#0c58c8" stroke="#0a3a9a" stroke-width=".8" stroke-linejoin="round"/></g><g transform="translate(140.0,412.600)"><rect x="-6" y="-1.800" width="12" height="4.400" fill="#0c58c8" stroke="#0a3a9a" stroke-width=".8" stroke-linejoin="round"/></g><g transform="translate(164.0,412.600)"><path d="M0 -3.300 L7 4.300 H-7Z" fill="#0c58c8" stroke="#0a3a9a" stroke-width=".8" stroke-linejoin="round"/></g><g transform="translate(188.4,412.600)"><path d="M-6.600 0.500 L-4.500 -1.500 L-2 2.200 L5.500 -5.800 L6.800 -4.200 L-1.800 6.600Z" fill="#0c58c8" stroke="#0a3a9a" stroke-width=".8" stroke-linejoin="round"/></g><g transform="translate(213.0,412.600)"><rect x="-6.200" y="-6.200" width="12.500" height="12.500" fill="#fff" stroke="#0c58c8" stroke-width="1.700"/><rect x="-6" y="-6" width="12" height="3.200" fill="#0c58c8"/><path d="M-3.800 -1.500 L-2.200 3.800 L0 -0.500 L2.200 3.800 L3.800 -1.500" stroke="#0c58c8" stroke-width="1.900" fill="none"/></g><g transform="translate(237.2,412.600)"><rect x="-6.200" y="-6.200" width="12.500" height="12.500" fill="#fff" stroke="#0c58c8" stroke-width="1.700"/><rect x="-6" y="-6" width="12" height="3.200" fill="#0c58c8"/><path d="M-4.500 -2 L4.500 4.500 M4.500 -2 L-4.500 4.500" stroke="#0c58c8" stroke-width="2.200" fill="none"/></g></svg>
<div class="t" style="left:264px;top:406px">1/2</div>
<div class="a" style="left:549px;top:104px;width:22px;height:22px;background:linear-gradient(#f4f9ff,#c4ddfb);border:1px solid #3c94f4"></div>
<svg class="a" style="left:548px;top:102px" width="232" height="28" viewBox="548 102 232 28"><path d="M555.500 108.500 V121.500 L558.500 118.700 L560.700 123.500 L562.700 122.600 L560.500 118 H564.500Z" fill="#fff" stroke="#3a6cc0" stroke-width="1"/><path d="M580.5 117.0 L575.5 122.0" stroke="#dca040" stroke-width="2.200" stroke-linecap="round"/><circle cx="584.5" cy="112.5" r="5.300" fill="#e4f2fc" stroke="#9cb0dc" stroke-width="1.300"/><rect x="584.5" y="112.5" width="4" height="4" transform="translate(-2,-2)" fill="none" stroke="#2a50b0" stroke-width="1.200"/><path d="M602.2 117.0 L597.2 122.0" stroke="#dca040" stroke-width="2.200" stroke-linecap="round"/><circle cx="606.2" cy="112.5" r="5.300" fill="#e4f2fc" stroke="#9cb0dc" stroke-width="1.300"/><path d="M606.2 112.5 m-2.500 0 h5 m-2.500 -2.500 v5" stroke="#2a50b0" stroke-width="1.300"/><path d="M624.5 117.0 L619.5 122.0" stroke="#dca040" stroke-width="2.200" stroke-linecap="round"/><circle cx="628.5" cy="112.5" r="5.300" fill="#e4f2fc" stroke="#9cb0dc" stroke-width="1.300"/><path d="M628.5 112.5 m-2.500 0 h5" stroke="#2a50b0" stroke-width="1.300"/><path d="M646.1 117.0 L641.1 122.0" stroke="#dca040" stroke-width="2.200" stroke-linecap="round"/><circle cx="650.1" cy="112.5" r="5.300" fill="#e4f2fc" stroke="#9cb0dc" stroke-width="1.300"/><path d="M650.1 112.5 m-3 -1 q1.500 -2.500 4 -2" stroke="#fff" stroke-width="1.200" fill="none"/><path d="M664.500 116 L663 114 L664.300 113 L666 115 V110 H667.500 V109 H669 V108.500 H670.500 V109.200 H672 V110.500 H673.500 V117 L672.500 120.500 H667Z" fill="#fff" stroke="#000" stroke-width="1" stroke-linejoin="round"/><path d="M667.700 110 V114 M669.700 109.500 V114 M671.700 110 V114" stroke="#000" stroke-width=".8"/><path d="M681.500 104 V127 M751.500 104 V127" stroke="#a0a0a0" stroke-width="1"/><path d="M687.500 121.500 V110 Q687.500 109 688.500 109 H692.500 L694 110.500 H699.500 V113" fill="#fbe9a0" stroke="#c89018" stroke-width="1"/><path d="M687.500 121.500 L690.500 113.500 H702.500 L699.500 121.500Z" fill="#fdd868" stroke="#c89018" stroke-width="1" stroke-linejoin="round"/><path d="M710 108 H724 V122 H711.500 L710 120.500Z" fill="#1040b0"/><rect x="713.300" y="109.400" width="7.800" height="5.200" fill="#fff"/><rect x="714.500" y="110.500" width="5.400" height="1" fill="#1040b0"/><rect x="714.500" y="112.500" width="5.400" height="1" fill="#1040b0"/><rect x="714" y="117" width="6.200" height="5" fill="#fff"/><rect x="715.300" y="118" width="2" height="4" fill="#1040b0"/><path d="M734.500 109 H743.500 L744.500 114 H733.500Z" fill="#fff" stroke="#6c8cc0" stroke-width=".8"/><path d="M731.500 116 Q731.500 113.500 734 113.500 H744 Q746.500 113.500 746.500 116 V120 Q746.500 121.500 745 121.500 H733 Q731.500 121.500 731.500 120Z" fill="#c8dcf4" stroke="#4a74b8" stroke-width="1"/><rect x="733" y="118.500" width="12" height="3" fill="#e8f0fc" stroke="#4a74b8" stroke-width=".6"/><rect x="740" y="116" width="2" height="1.300" fill="#30a030"/><rect x="742.500" y="116" width="2" height="1.300" fill="#e03030"/><rect x="757" y="107" width="16" height="16" fill="#a8ccf0"/><rect x="757" y="117.500" width="16" height="5.500" fill="#f0c060"/><circle cx="769" cy="110.500" r="2.200" fill="#f8f040"/><path d="M762.500 108 V121 M759.500 112 V115.500 H762.500 M765.500 110.500 V114 H762.500" stroke="#18a028" stroke-width="2" fill="none" stroke-linecap="round"/><path d="M765 120.500 H771" stroke="#c08830" stroke-width="1"/></svg>
<svg class="a" style="left:548px;top:128px;font-family:'Liberation Sans','WenQuanYi Zen Hei','Noto Sans CJK SC',sans-serif" width="467" height="299" viewBox="548 128 467 299"><line x1="644.5" y1="141.0" x2="644.5" y2="392.5" stroke="#7a7a7a" stroke-width="1" stroke-dasharray="1 1"/><line x1="684.5" y1="141.0" x2="684.5" y2="392.5" stroke="#7a7a7a" stroke-width="1" stroke-dasharray="1 1"/><line x1="723.5" y1="141.0" x2="723.5" y2="392.5" stroke="#7a7a7a" stroke-width="1" stroke-dasharray="1 1"/><line x1="763.5" y1="141.0" x2="763.5" y2="392.5" stroke="#7a7a7a" stroke-width="1" stroke-dasharray="1 1"/><line x1="802.5" y1="141.0" x2="802.5" y2="392.5" stroke="#7a7a7a" stroke-width="1" stroke-dasharray="1 1"/><line x1="841.5" y1="141.0" x2="841.5" y2="392.5" stroke="#7a7a7a" stroke-width="1" stroke-dasharray="1 1"/><line x1="881.5" y1="141.0" x2="881.5" y2="392.5" stroke="#7a7a7a" stroke-width="1" stroke-dasharray="1 1"/><line x1="920.5" y1="141.0" x2="920.5" y2="392.5" stroke="#7a7a7a" stroke-width="1" stroke-dasharray="1 1"/><line x1="960.5" y1="141.0" x2="960.5" y2="392.5" stroke="#7a7a7a" stroke-width="1" stroke-dasharray="1 1"/><line x1="608.0" y1="367.5" x2="999.5" y2="367.5" stroke="#7a7a7a" stroke-width="1" stroke-dasharray="1 1"/><line x1="608.0" y1="341.5" x2="999.5" y2="341.5" stroke="#7a7a7a" stroke-width="1" stroke-dasharray="1 1"/><line x1="608.0" y1="316.5" x2="999.5" y2="316.5" stroke="#7a7a7a" stroke-width="1" stroke-dasharray="1 1"/><line x1="608.0" y1="291.5" x2="999.5" y2="291.5" stroke="#7a7a7a" stroke-width="1" stroke-dasharray="1 1"/><line x1="608.0" y1="266.5" x2="999.5" y2="266.5" stroke="#7a7a7a" stroke-width="1" stroke-dasharray="1 1"/><line x1="608.0" y1="240.5" x2="999.5" y2="240.5" stroke="#7a7a7a" stroke-width="1" stroke-dasharray="1 1"/><line x1="608.0" y1="215.5" x2="999.5" y2="215.5" stroke="#7a7a7a" stroke-width="1" stroke-dasharray="1 1"/><line x1="608.0" y1="190.5" x2="999.5" y2="190.5" stroke="#7a7a7a" stroke-width="1" stroke-dasharray="1 1"/><line x1="608.0" y1="164.5" x2="999.5" y2="164.5" stroke="#7a7a7a" stroke-width="1" stroke-dasharray="1 1"/><path d="M607 139.500 H1000" stroke="#000" stroke-width="1" stroke-dasharray="3 1" fill="none"/><path d="M999.500 140 V392 M607 392.500 H1000" stroke="#000" stroke-width="1" stroke-dasharray="1 1" fill="none"/><path d="M606.500 139 V393" stroke="#000" stroke-width="1" fill="none"/><line x1="602" y1="392.5" x2="606" y2="392.5" stroke="#000" stroke-width="1"/><line x1="604" y1="386.5" x2="606" y2="386.5" stroke="#555" stroke-width="1"/><line x1="604" y1="379.5" x2="606" y2="379.5" stroke="#555" stroke-width="1"/><line x1="604" y1="373.5" x2="606" y2="373.5" stroke="#555" stroke-width="1"/><line x1="602" y1="367.5" x2="606" y2="367.5" stroke="#000" stroke-width="1"/><line x1="604" y1="360.5" x2="606" y2="360.5" stroke="#555" stroke-width="1"/><line x1="604" y1="354.5" x2="606" y2="354.5" stroke="#555" stroke-width="1"/><line x1="604" y1="348.5" x2="606" y2="348.5" stroke="#555" stroke-width="1"/><line x1="602" y1="341.5" x2="606" y2="341.5" stroke="#000" stroke-width="1"/><line x1="604" y1="335.5" x2="606" y2="335.5" stroke="#555" stroke-width="1"/><line x1="604" y1="329.5" x2="606" y2="329.5" stroke="#555" stroke-width="1"/><line x1="604" y1="322.5" x2="606" y2="322.5" stroke="#555" stroke-width="1"/><line x1="602" y1="316.5" x2="606" y2="316.5" stroke="#000" stroke-width="1"/><line x1="604" y1="310.5" x2="606" y2="310.5" stroke="#555" stroke-width="1"/><line x1="604" y1="303.5" x2="606" y2="303.5" stroke="#555" stroke-width="1"/><line x1="604" y1="297.5" x2="606" y2="297.5" stroke="#555" stroke-width="1"/><line x1="602" y1="291.5" x2="606" y2="291.5" stroke="#000" stroke-width="1"/><line x1="604" y1="284.5" x2="606" y2="284.5" stroke="#555" stroke-width="1"/><line x1="604" y1="278.5" x2="606" y2="278.5" stroke="#555" stroke-width="1"/><line x1="604" y1="272.5" x2="606" y2="272.5" stroke="#555" stroke-width="1"/><line x1="602" y1="266.5" x2="606" y2="266.5" stroke="#000" stroke-width="1"/><line x1="604" y1="259.5" x2="606" y2="259.5" stroke="#555" stroke-width="1"/><line x1="604" y1="253.5" x2="606" y2="253.5" stroke="#555" stroke-width="1"/><line x1="604" y1="247.5" x2="606" y2="247.5" stroke="#555" stroke-width="1"/><line x1="602" y1="240.5" x2="606" y2="240.5" stroke="#000" stroke-width="1"/><line x1="604" y1="234.5" x2="606" y2="234.5" stroke="#555" stroke-width="1"/><line x1="604" y1="228.5" x2="606" y2="228.5" stroke="#555" stroke-width="1"/><line x1="604" y1="221.5" x2="606" y2="221.5" stroke="#555" stroke-width="1"/><line x1="602" y1="215.5" x2="606" y2="215.5" stroke="#000" stroke-width="1"/><line x1="604" y1="209.5" x2="606" y2="209.5" stroke="#555" stroke-width="1"/><line x1="604" y1="202.5" x2="606" y2="202.5" stroke="#555" stroke-width="1"/><line x1="604" y1="196.5" x2="606" y2="196.5" stroke="#555" stroke-width="1"/><line x1="602" y1="190.5" x2="606" y2="190.5" stroke="#000" stroke-width="1"/><line x1="604" y1="183.5" x2="606" y2="183.5" stroke="#555" stroke-width="1"/><line x1="604" y1="177.5" x2="606" y2="177.5" stroke="#555" stroke-width="1"/><line x1="604" y1="171.5" x2="606" y2="171.5" stroke="#555" stroke-width="1"/><line x1="602" y1="164.5" x2="606" y2="164.5" stroke="#000" stroke-width="1"/><line x1="604" y1="158.5" x2="606" y2="158.5" stroke="#555" stroke-width="1"/><line x1="604" y1="152.5" x2="606" y2="152.5" stroke="#555" stroke-width="1"/><line x1="604" y1="145.5" x2="606" y2="145.5" stroke="#555" stroke-width="1"/><line x1="602" y1="139.5" x2="606" y2="139.5" stroke="#000" stroke-width="1"/><line x1="606.5" y1="393" x2="606.5" y2="397" stroke="#000" stroke-width="1"/><line x1="616.5" y1="393" x2="616.5" y2="395" stroke="#555" stroke-width="1"/><line x1="625.5" y1="393" x2="625.5" y2="395" stroke="#555" stroke-width="1"/><line x1="635.5" y1="393" x2="635.5" y2="395" stroke="#555" stroke-width="1"/><line x1="644.5" y1="393" x2="644.5" y2="397" stroke="#000" stroke-width="1"/><line x1="654.5" y1="393" x2="654.5" y2="395" stroke="#555" stroke-width="1"/><line x1="664.5" y1="393" x2="664.5" y2="395" stroke="#555" stroke-width="1"/><line x1="674.5" y1="393" x2="674.5" y2="395" stroke="#555" stroke-width="1"/><line x1="684.5" y1="393" x2="684.5" y2="397" stroke="#000" stroke-width="1"/><line x1="694.5" y1="393" x2="694.5" y2="395" stroke="#555" stroke-width="1"/><line x1="704.5" y1="393" x2="704.5" y2="395" stroke="#555" stroke-width="1"/><line x1="713.5" y1="393" x2="713.5" y2="395" stroke="#555" stroke-width="1"/><line x1="723.5" y1="393" x2="723.5" y2="397" stroke="#000" stroke-width="1"/><line x1="733.5" y1="393" x2="733.5" y2="395" stroke="#555" stroke-width="1"/><line x1="743.5" y1="393" x2="743.5" y2="395" stroke="#555" stroke-width="1"/><line x1="753.5" y1="393" x2="753.5" y2="395" stroke="#555" stroke-width="1"/><line x1="763.5" y1="393" x2="763.5" y2="397" stroke="#000" stroke-width="1"/><line x1="773.5" y1="393" x2="773.5" y2="395" stroke="#555" stroke-width="1"/><line x1="783.5" y1="393" x2="783.5" y2="395" stroke="#555" stroke-width="1"/><line x1="792.5" y1="393" x2="792.5" y2="395" stroke="#555" stroke-width="1"/><line x1="802.5" y1="393" x2="802.5" y2="397" stroke="#000" stroke-width="1"/><line x1="812.5" y1="393" x2="812.5" y2="395" stroke="#555" stroke-width="1"/><line x1="822.5" y1="393" x2="822.5" y2="395" stroke="#555" stroke-width="1"/><line x1="831.5" y1="393" x2="831.5" y2="395" stroke="#555" stroke-width="1"/><line x1="841.5" y1="393" x2="841.5" y2="397" stroke="#000" stroke-width="1"/><line x1="851.5" y1="393" x2="851.5" y2="395" stroke="#555" stroke-width="1"/><line x1="861.5" y1="393" x2="861.5" y2="395" stroke="#555" stroke-width="1"/><line x1="871.5" y1="393" x2="871.5" y2="395" stroke="#555" stroke-width="1"/><line x1="881.5" y1="393" x2="881.5" y2="397" stroke="#000" stroke-width="1"/><line x1="891.5" y1="393" x2="891.5" y2="395" stroke="#555" stroke-width="1"/><line x1="901.5" y1="393" x2="901.5" y2="395" stroke="#555" stroke-width="1"/><line x1="910.5" y1="393" x2="910.5" y2="395" stroke="#555" stroke-width="1"/><line x1="920.5" y1="393" x2="920.5" y2="397" stroke="#000" stroke-width="1"/><line x1="930.5" y1="393" x2="930.5" y2="395" stroke="#555" stroke-width="1"/><line x1="940.5" y1="393" x2="940.5" y2="395" stroke="#555" stroke-width="1"/><line x1="950.5" y1="393" x2="950.5" y2="395" stroke="#555" stroke-width="1"/><line x1="960.5" y1="393" x2="960.5" y2="397" stroke="#000" stroke-width="1"/><line x1="970.5" y1="393" x2="970.5" y2="395" stroke="#555" stroke-width="1"/><line x1="980.5" y1="393" x2="980.5" y2="395" stroke="#555" stroke-width="1"/><line x1="989.5" y1="393" x2="989.5" y2="395" stroke="#555" stroke-width="1"/><line x1="999.5" y1="393" x2="999.5" y2="397" stroke="#000" stroke-width="1"/><polyline points="606.5,366.3 612.0,365.3 620.0,363.6 627.0,362.0 634.2,360.2 640.0,357.5 645.0,355.0 652.0,353.0 660.0,349.5 666.0,346.5 671.8,343.8 680.0,339.5 685.0,336.6 700.0,327.5 712.0,320.5 723.5,313.4 731.7,308.6 745.0,300.3 763.4,288.8 778.4,279.5 795.0,268.3 811.4,257.2 825.0,247.5 840.7,236.6 856.0,225.6 871.7,214.2 882.5,206.0 895.0,197.8 907.0,189.8 920.6,180.7 931.0,175.2 941.7,169.8 946.4,167.3 951.0,164.0 954.0,162.6 957.0,162.0 959.5,162.4 961.0,163.4 962.8,164.5" fill="none" stroke="#ff0000" stroke-width="1.100" stroke-linejoin="round"/><text x="600.500" y="396.3" text-anchor="end" font-size="10.500">0</text><text x="600.500" y="371.0" text-anchor="end" font-size="10.500">0.3528</text><text x="600.500" y="345.7" text-anchor="end" font-size="10.500">0.7055</text><text x="600.500" y="320.4" text-anchor="end" font-size="10.500">1.0583</text><text x="600.500" y="295.1" text-anchor="end" font-size="10.500">1.4111</text><text x="600.500" y="269.8" text-anchor="end" font-size="10.500">1.7639</text><text x="600.500" y="244.5" text-anchor="end" font-size="10.500">2.1166</text><text x="600.500" y="219.2" text-anchor="end" font-size="10.500">2.4694</text><text x="600.500" y="193.9" text-anchor="end" font-size="10.500">2.8222</text><text x="600.500" y="168.6" text-anchor="end" font-size="10.500">3.1749</text><text x="600.500" y="143.3" text-anchor="end" font-size="10.500">3.5277</text><text x="605.7" y="408" text-anchor="middle" font-size="10.500">0</text><text x="643.7" y="408" text-anchor="middle" font-size="10.500">0.352</text><text x="683.7" y="408" text-anchor="middle" font-size="10.500">0.705</text><text x="722.7" y="408" text-anchor="middle" font-size="10.500">1.057</text><text x="762.7" y="408" text-anchor="middle" font-size="10.500">1.41</text><text x="801.7" y="408" text-anchor="middle" font-size="10.500">1.762</text><text x="840.7" y="408" text-anchor="middle" font-size="10.500">2.115</text><text x="880.7" y="408" text-anchor="middle" font-size="10.500">2.467</text><text x="919.7" y="408" text-anchor="middle" font-size="10.500">2.82</text><text x="959.7" y="408" text-anchor="middle" font-size="10.500">3.172</text><text x="1012" y="408" text-anchor="end" font-size="10.500">3.524</text><text x="801" y="421.500" text-anchor="middle" font-size="12">时间<tspan font-size="10.500">s</tspan></text><text transform="translate(562.800,265.500) rotate(-90)" text-anchor="middle" font-size="12">试验力<tspan font-size="10">kN</tspan></text></svg>
<div class="a" style="left:6px;top:427px;width:1009px;height:2px;background:#8c8cff"></div>
<div class="a" style="left:7px;top:429px;width:1007px;height:261px;background:#fff"></div>
<div class="a" style="left:6px;top:429px;width:1px;height:278px;background:#8080ff"></div>
<div class="a" style="left:1014px;top:429px;width:1px;height:278px;background:#8080ff"></div>
<div class="a" style="left:7px;top:429px;width:1007px;height:134px;overflow:hidden"><div class="hd" style="left:0;top:0;width:52px;height:20px"></div><div class="hd" style="left:52px;top:0px;width:33px;padding-left:2px;height:20px;line-height:22px;">编号</div><div class="hd" style="left:85px;top:0px;width:33px;padding-left:2px;height:20px;line-height:22px;">规格</div><div class="hd" style="left:118px;top:0px;width:81px;text-indent:-1px;height:20px;line-height:22px;">破型力<span class="l">(kN)</span></div><div class="hd" style="left:199px;top:0px;width:81px;padding-left:2px;height:20px;line-height:22px;">杯突值<span class="l">(mm)</span></div><div class="hd" style="left:280px;top:0px;width:65px;padding-left:2px;height:20px;line-height:22px;">试验日期</div><div class="hd" style="left:345px;top:0px;width:48px;padding-left:2px;height:20px;line-height:22px;">试验人</div><div class="hd" style="left:393px;top:0px;width:65px;padding-left:2px;height:20px;line-height:22px;">试验方法</div><div class="hd" style="left:458px;top:0px;width:50px;padding-left:2px;height:20px;line-height:22px;">润滑质</div><div class="hd" style="left:508px;top:0px;width:128px;padding-left:2px;height:20px;line-height:22px;">试验速度<span class="l">(mm/min)</span></div><div class="hd" style="left:636px;top:0px;width:129px;padding-left:2px;height:20px;line-height:22px;">冲头球形直径<span class="l">(mm)</span></div><div class="hd" style="left:765px;top:0px;width:98px;padding-left:2px;height:20px;line-height:22px;">压膜孔径<span class="l">(mm)</span></div><div class="hd" style="left:863px;top:0px;width:96px;padding-left:2px;height:20px;line-height:22px;">垫膜孔径<span class="l">(mm)</span></div><div class="hd" style="left:959px;top:0px;width:97px;padding-left:2px;height:20px;line-height:22px;">厚度<span class="l">(mm)</span></div><div class="hd" style="left:0;top:20px;width:52px;padding-left:3px">1*</div><div class="cl" style="left:52px;top:20px;width:33px;padding-left:2px;background:#2cfafa;"><span class="l">001</span></div><div class="cl" style="left:85px;top:20px;width:33px;padding-left:2px;background:#2cfafa;">标样</div><div class="cl" style="left:118px;top:20px;width:81px;text-indent:-1px;background:#2cfafa;"><span class="l">3.208</span></div><div class="cl" style="left:199px;top:20px;width:81px;padding-left:2px;background:#2cfafa;"><span class="l">5.260</span></div><div class="cl" style="left:280px;top:20px;width:65px;padding-left:2px;background:#2cfafa;"><span class="l">2015-11-05</span></div><div class="cl" style="left:345px;top:20px;width:48px;padding-left:2px;background:#2cfafa;"><span class="l">11</span></div><div class="cl" style="left:393px;top:20px;width:65px;padding-left:2px;background:#2cfafa;">GB/T 4156-2007</div><div class="cl" style="left:458px;top:20px;width:50px;padding-left:2px;background:#2cfafa;">石墨脂</div><div class="cl" style="left:508px;top:20px;width:128px;padding-left:2px;background:#2cfafa;">5</div><div class="cl" style="left:636px;top:20px;width:129px;padding-left:2px;background:#2cfafa;"><span class="l">20</span></div><div class="cl" style="left:765px;top:20px;width:98px;padding-left:2px;background:#2cfafa;"><span class="l">27</span></div><div class="cl" style="left:863px;top:20px;width:96px;padding-left:2px;background:#2cfafa;"><span class="l">33</span></div><div class="cl" style="left:959px;top:20px;width:97px;padding-left:2px;background:#2cfafa;"><span class="l">0.5</span></div><div class="hd" style="left:0;top:39px;width:52px;padding-left:3px">2</div><div class="cl" style="left:52px;top:39px;width:33px;padding-left:2px;"><span class="l">001</span></div><div class="cl" style="left:85px;top:39px;width:33px;padding-left:2px;">标样</div><div class="cl" style="left:118px;top:39px;width:81px;text-indent:-1px;"><span class="l">3.276</span></div><div class="cl" style="left:199px;top:39px;width:81px;padding-left:2px;"><span class="l">5.390</span></div><div class="cl" style="left:280px;top:39px;width:65px;padding-left:2px;"><span class="l">2015-11-05</span></div><div class="cl" style="left:345px;top:39px;width:48px;padding-left:2px;"><span class="l">11</span></div><div class="cl" style="left:393px;top:39px;width:65px;padding-left:2px;">GB/T 4156-2007</div><div class="cl" style="left:458px;top:39px;width:50px;padding-left:2px;">石墨脂</div><div class="cl" style="left:508px;top:39px;width:128px;padding-left:2px;">5</div><div class="cl" style="left:636px;top:39px;width:129px;padding-left:2px;"><span class="l">20</span></div><div class="cl" style="left:765px;top:39px;width:98px;padding-left:2px;"><span class="l">27</span></div><div class="cl" style="left:863px;top:39px;width:96px;padding-left:2px;"><span class="l">33</span></div><div class="cl" style="left:959px;top:39px;width:97px;padding-left:2px;"><span class="l">0.5</span></div><div class="hd" style="left:0;top:58px;width:52px;padding-left:3px">最大值</div><div class="cl" style="left:52px;top:58px;width:33px;padding-left:2px;"></div><div class="cl" style="left:85px;top:58px;width:33px;padding-left:2px;"></div><div class="cl" style="left:118px;top:58px;width:81px;text-indent:-1px;"><span class="l">3.28</span></div><div class="cl" style="left:199px;top:58px;width:81px;padding-left:2px;"><span class="l">5.39</span></div><div class="cl" style="left:280px;top:58px;width:65px;padding-left:2px;"></div><div class="cl" style="left:345px;top:58px;width:48px;padding-left:2px;"></div><div class="cl" style="left:393px;top:58px;width:65px;padding-left:2px;"></div><div class="cl" style="left:458px;top:58px;width:50px;padding-left:2px;"></div><div class="cl" style="left:508px;top:58px;width:128px;padding-left:2px;"></div><div class="cl" style="left:636px;top:58px;width:129px;padding-left:2px;"></div><div class="cl" style="left:765px;top:58px;width:98px;padding-left:2px;"></div><div class="cl" style="left:863px;top:58px;width:96px;padding-left:2px;"></div><div class="cl" style="left:959px;top:58px;width:97px;padding-left:2px;"></div><div class="hd" style="left:0;top:77px;width:52px;padding-left:3px">最小值</div><div class="cl" style="left:52px;top:77px;width:33px;padding-left:2px;"></div><div class="cl" style="left:85px;top:77px;width:33px;padding-left:2px;"></div><div class="cl" style="left:118px;top:77px;width:81px;text-indent:-1px;"><span class="l">3.21</span></div><div class="cl" style="left:199px;top:77px;width:81px;padding-left:2px;"><span class="l">5.26</span></div><div class="cl" style="left:280px;top:77px;width:65px;padding-left:2px;"></div><div class="cl" style="left:345px;top:77px;width:48px;padding-left:2px;"></div><div class="cl" style="left:393px;top:77px;width:65px;padding-left:2px;"></div><div class="cl" style="left:458px;top:77px;width:50px;padding-left:2px;"></div><div class="cl" style="left:508px;top:77px;width:128px;padding-left:2px;"></div><div class="cl" style="left:636px;top:77px;width:129px;padding-left:2px;"></div><div class="cl" style="left:765px;top:77px;width:98px;padding-left:2px;"></div><div class="cl" style="left:863px;top:77px;width:96px;padding-left:2px;"></div><div class="cl" style="left:959px;top:77px;width:97px;padding-left:2px;"></div><div class="hd" style="left:0;top:96px;width:52px;padding-left:3px">平均值</div><div class="cl" style="left:52px;top:96px;width:33px;padding-left:2px;"></div><div class="cl" style="left:85px;top:96px;width:33px;padding-left:2px;"></div><div class="cl" style="left:118px;top:96px;width:81px;text-indent:-1px;"><span class="l">3.24</span></div><div class="cl" style="left:199px;top:96px;width:81px;padding-left:2px;"><span class="l">5.33</span></div><div class="cl" style="left:280px;top:96px;width:65px;padding-left:2px;"></div><div class="cl" style="left:345px;top:96px;width:48px;padding-left:2px;"></div><div class="cl" style="left:393px;top:96px;width:65px;padding-left:2px;"></div><div class="cl" style="left:458px;top:96px;width:50px;padding-left:2px;"></div><div class="cl" style="left:508px;top:96px;width:128px;padding-left:2px;"></div><div class="cl" style="left:636px;top:96px;width:129px;padding-left:2px;"></div><div class="cl" style="left:765px;top:96px;width:98px;padding-left:2px;"></div><div class="cl" style="left:863px;top:96px;width:96px;padding-left:2px;"></div><div class="cl" style="left:959px;top:96px;width:97px;padding-left:2px;"></div><div class="hd" style="left:0;top:115px;width:52px;padding-left:3px">标准差</div><div class="cl" style="left:52px;top:115px;width:33px;padding-left:2px;"></div><div class="cl" style="left:85px;top:115px;width:33px;padding-left:2px;"></div><div class="cl" style="left:118px;top:115px;width:81px;text-indent:-1px;"><span class="l">0.05</span></div><div class="cl" style="left:199px;top:115px;width:81px;padding-left:2px;"><span class="l">0.09</span></div><div class="cl" style="left:280px;top:115px;width:65px;padding-left:2px;"></div><div class="cl" style="left:345px;top:115px;width:48px;padding-left:2px;"></div><div class="cl" style="left:393px;top:115px;width:65px;padding-left:2px;"></div><div class="cl" style="left:458px;top:115px;width:50px;padding-left:2px;"></div><div class="cl" style="left:508px;top:115px;width:128px;padding-left:2px;"></div><div class="cl" style="left:636px;top:115px;width:129px;padding-left:2px;"></div><div class="cl" style="left:765px;top:115px;width:98px;padding-left:2px;"></div><div class="cl" style="left:863px;top:115px;width:96px;padding-left:2px;"></div><div class="cl" style="left:959px;top:115px;width:97px;padding-left:2px;"></div><svg class="a" style="left:33px;top:20px" width="14" height="19" viewBox="0 0 14 19"><path d="M4 2 H8 V6.500 H7 V13 H8 V18 H4 V13 H5 V6.500 H4Z" fill="#000"/><path d="M1.800 10 H10.200 M2.300 6.300 L9.700 13.700 M9.700 6.300 L2.300 13.700" stroke="#ff0000" stroke-width=".9"/><rect x="5.300" y="8.500" width="1.400" height="3" fill="#000"/></svg><svg class="a" style="left:33px;top:39px" width="14" height="19" viewBox="0 0 14 19"><path d="M4 2 H8 V6.500 H7 V13 H8 V18 H4 V13 H5 V6.500 H4Z" fill="#000"/><path d="M1.800 10 H10.200 M2.300 6.300 L9.700 13.700 M9.700 6.300 L2.300 13.700" stroke="#ff0000" stroke-width=".9"/><rect x="5.300" y="8.500" width="1.400" height="3" fill="#000"/></svg></div>
<div class="a" style="left:7px;top:690px;width:1007px;height:16px;background:linear-gradient(#e8e8e8,#f0f0f0 50%,#f2f2f2)"></div>
<div class="a" style="left:7px;top:706px;width:1007px;height:1px;background:#fff"></div>
<div class="a" style="left:26px;top:690px;width:15px;height:15px;border:1px solid #979797;border-radius:2px;background:linear-gradient(#f4f4f4,#e8e8e8 48%,#d4d4d4 52%,#cfcfcf)"></div>
<svg class="a" style="left:12px;top:692px" width="8" height="10" viewBox="0 0 8 10"><path d="M6 1 L2 5 L6 9Z" fill="#303030"/></svg>
<svg class="a" style="left:1001px;top:692px" width="8" height="10" viewBox="0 0 8 10"><path d="M2 1 L6 5 L2 9Z" fill="#303030"/></svg>
<div class="a" style="left:3px;top:710px;width:1016px;height:18px;background:#dfe1e6"></div>
<div class="a" style="left:243px;top:711px;width:1px;height:16px;background:#c4c6cc"></div>
<div class="a" style="left:783px;top:711px;width:1px;height:16px;background:#c4c6cc"></div>
<div class="a" style="left:884px;top:711px;width:1px;height:16px;background:#c4c6cc"></div>
<div class="t" style="left:248px;top:714px;letter-spacing:.22px">D:\Program Files\WinCupping\Data\Cupp\20151105\20151105012.Cupp</div>
<div class="t" style="left:888px;top:714px;letter-spacing:.2px">2015/11/5 11:01:27</div>
</body></html>
